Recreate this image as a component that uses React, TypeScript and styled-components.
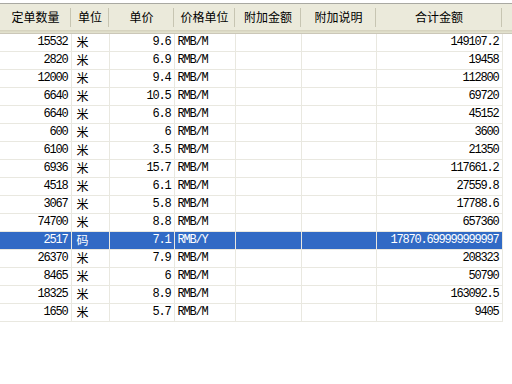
import React from "react";
import styled, { createGlobalStyle } from "styled-components";

const GlobalStyle = createGlobalStyle`
  html, body {
    margin: 0;
    padding: 0;
    background: #ffffff;
  }
  body {
    width: 512px;
    height: 384px;
    overflow: hidden;
    font-family: "Noto Sans CJK SC", sans-serif;
  }
`;

interface IOrder {
  qty: string;
  unit: string;
  price: string;
  priceUnit: string;
  total: string;
  selected?: boolean;
}

const orders: IOrder[] = [
  { qty: "15532", unit: "米", price: "9.6", priceUnit: "RMB/M", total: "149107.2" },
  { qty: "2820", unit: "米", price: "6.9", priceUnit: "RMB/M", total: "19458" },
  { qty: "12000", unit: "米", price: "9.4", priceUnit: "RMB/M", total: "112800" },
  { qty: "6640", unit: "米", price: "10.5", priceUnit: "RMB/M", total: "69720" },
  { qty: "6640", unit: "米", price: "6.8", priceUnit: "RMB/M", total: "45152" },
  { qty: "600", unit: "米", price: "6", priceUnit: "RMB/M", total: "3600" },
  { qty: "6100", unit: "米", price: "3.5", priceUnit: "RMB/M", total: "21350" },
  { qty: "6936", unit: "米", price: "15.7", priceUnit: "RMB/M", total: "117661.2" },
  { qty: "4518", unit: "米", price: "6.1", priceUnit: "RMB/M", total: "27559.8" },
  { qty: "3067", unit: "米", price: "5.8", priceUnit: "RMB/M", total: "17788.6" },
  { qty: "74700", unit: "米", price: "8.8", priceUnit: "RMB/M", total: "657360" },
  { qty: "2517", unit: "码", price: "7.1", priceUnit: "RMB/Y", total: "17870.699999999997", selected: true },
  { qty: "26370", unit: "米", price: "7.9", priceUnit: "RMB/M", total: "208323" },
  { qty: "8465", unit: "米", price: "6", priceUnit: "RMB/M", total: "50790" },
  { qty: "18325", unit: "米", price: "8.9", priceUnit: "RMB/M", total: "163092.5" },
  { qty: "1650", unit: "米", price: "5.7", priceUnit: "RMB/M", total: "9405" },
];

// column widths, the table's last col is the empty area right of the list
const columns = [
  { title: "定单数量", width: 71 },
  { title: "单位", width: 38 },
  { title: "单价", width: 65 },
  { title: "价格单位", width: 61 },
  { title: "附加金额", width: 66 },
  { title: "附加说明", width: 75 },
  { title: "合计金额", width: 126 },
];

const App = () => {
  return (
    <>
      <GlobalStyle />
      <ListView>
        <Grid>
          <colgroup>
            {columns.map((c) => (
              <col key={c.title} style={{ width: c.width }} />
            ))}
            <col />
          </colgroup>
          <thead>
            <tr>
              {columns.map((c) => (
                <HeadCell key={c.title}>{c.title}</HeadCell>
              ))}
              <HeadCell $filler />
            </tr>
          </thead>
          <tbody>
            {orders.map((o, i) => (
              <Row key={i} $selected={o.selected}>
                <Cell $align="right">{o.qty}</Cell>
                <Cell $cjk>{o.unit}</Cell>
                <Cell $align="right">{o.price}</Cell>
                <Cell>{o.priceUnit}</Cell>
                <Cell />
                <Cell />
                <Cell $align="right">{o.total}</Cell>
                <FillerCell />
              </Row>
            ))}
          </tbody>
        </Grid>
      </ListView>
    </>
  );
};

export default App;

const ListView = styled.div`
  margin-top: 3px;
  border-top: 1px solid #a9a9a2;
  width: 512px;
`;

const Grid = styled.table`
  width: 512px;
  table-layout: fixed;
  border-collapse: collapse;
  border-spacing: 0;
`;

const HeadCell = styled.th<{ $filler?: boolean }>`
  position: relative;
  height: 29px;
  padding: 0;
  background: #ebeadb;
  box-shadow: inset 0 -1px 0 #e2e1cd, inset 0 -2px 0 #dcdac6, inset 0 -3px 0 #d6d3bf;
  border-bottom: 1px solid #cbc7b8;
  font-family: "Noto Sans CJK SC", sans-serif;
  font-size: 12px;
  font-weight: 400;
  color: #000000;
  text-align: center;
  line-height: 26px;
  vertical-align: top;
  white-space: nowrap;
  overflow: hidden;
  &::after {
    content: "";
    display: ${(p) => (p.$filler ? "none" : "block")};
    position: absolute;
    right: 0;
    top: 4px;
    bottom: 6px;
    width: 1px;
    background: #c7c5b2;
    box-shadow: 1px 0 0 #ffffff;
  }
`;

const Row = styled.tr<{ $selected?: boolean }>`
  height: 18px;
  background: ${(p) => (p.$selected ? "#316ac5" : "#ffffff")};
  color: ${(p) => (p.$selected ? "#ffffff" : "#000000")};
`;

// the unit column uses the CJK font, whose glyphs sit low, so it gets 2px of bottom padding
const Cell = styled.td<{ $align?: "left" | "right"; $cjk?: boolean }>`
  height: ${(p) => (p.$cjk ? "15px" : "17px")};
  padding: 0 ${(p) => (p.$align === "right" ? "3px" : "0")} ${(p) => (p.$cjk ? "2px" : "0")}
    ${(p) => (p.$cjk ? "5px" : "3px")};
  border-right: 1px solid #e9e8e0;
  border-bottom: 1px solid #e9e8e0;
  text-align: ${(p) => p.$align || "left"};
  font-family: ${(p) =>
    p.$cjk ? `"Noto Sans CJK SC", sans-serif` : `"Liberation Mono", "Noto Sans CJK SC", monospace`};
  font-size: 12px;
  letter-spacing: ${(p) => (p.$cjk ? "0" : "-1.2px")};
  line-height: ${(p) => (p.$cjk ? "15px" : "17px")};
  white-space: nowrap;
  overflow: hidden;
`;

const FillerCell = styled.td`
  background: #ffffff;
  padding: 0;
`;
